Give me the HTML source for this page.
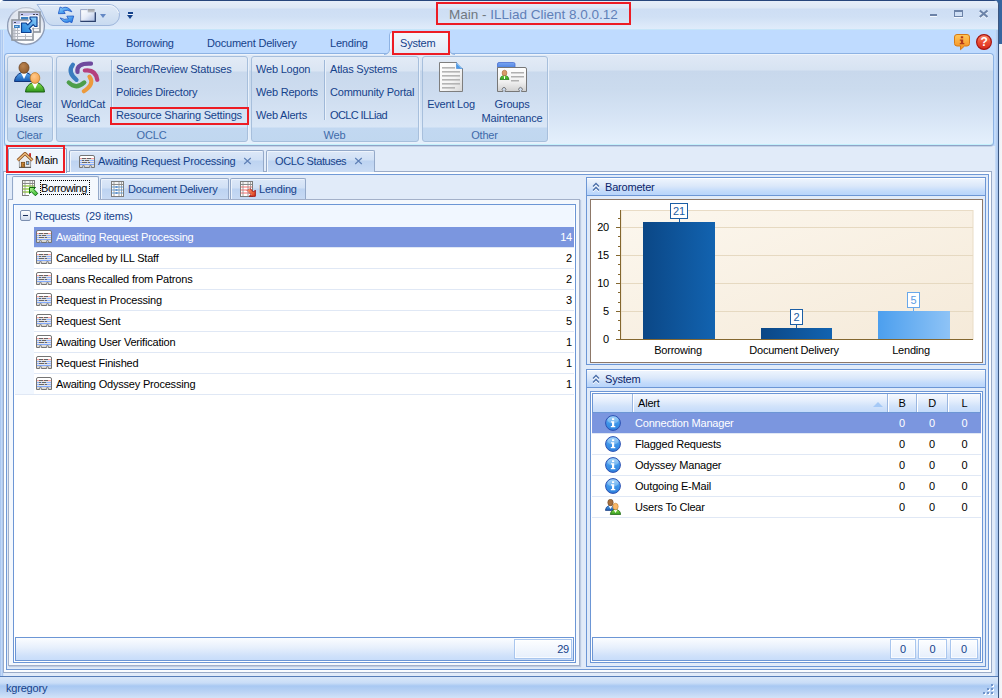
<!DOCTYPE html>
<html><head><meta charset="utf-8"><title>Main - ILLiad Client 8.0.0.12</title>
<style>
*{box-sizing:border-box;margin:0;padding:0}
html,body{width:1002px;height:698px;overflow:hidden;background:linear-gradient(90deg,#fff 0,#fff 999px,#e4eefb 999px,#e4eefb 1000px,#f1f2f6 1000px,#f5f5f8 1002px)}
body{font-family:"Liberation Sans","DejaVu Sans",sans-serif;font-size:11px;letter-spacing:-0.2px;color:#15428b;position:relative}
div,svg{position:absolute}
.t{white-space:nowrap;line-height:13px;height:13px}
.c{text-align:center}
#deskblue{left:996px;top:0;width:6px;height:44px;background:#36659f}
#win{left:0;top:0;width:999px;height:698px;overflow:hidden;border-radius:5px 5px 0 0;background:#bfdbff;border-right:1px solid #3b5680}
#cap{left:0;top:0;width:999px;height:30px;background:linear-gradient(#27467c 0,#27467c 1px,#e6eef9 1px,#dde8f6 8px,#cedef4 9px,#d0e0f5 17px,#dfebfa 28px,#e0ecfb 29px,#c6e5f9 29px,#c6e5f9 30px)}
#tabrow{left:0;top:30px;width:999px;height:24px;background:#bfdbff}
#lborder{left:0;top:30px;width:4px;height:668px;background:linear-gradient(90deg,#abc7f0 0,#abc7f0 1px,#c2d9f7 1px,#c2d9f7 2px,#aec9f0 2px,#aec9f0 3px,#d3e3f8 3px,#d3e3f8 4px)}
#rborder{left:995px;top:30px;width:3px;height:668px;background:linear-gradient(90deg,#d0e1f8 0,#b9d2f3 1px,#a9c6ef 3px)}
#ribbon{left:4px;top:53px;width:990px;height:93px;border:1px solid #8db2e3;border-bottom-color:#8fa3c7;border-radius:4px;background:linear-gradient(#e0e9f6 0,#d7e3f2 16px,#c8d8ec 17px,#cbdbee 35px,#d6e4f5 62px,#e4f0fc 90px);box-shadow:0 1px 0 rgba(143,163,199,.35),inset 0 -1px 0 #c3f1fc,inset 0 1px 0 #eef4fb}
.grp{top:56px;height:86px;border:1px solid #a7bfdc;border-radius:3px;background:linear-gradient(#e3ebf6 0,#dae5f3 14px,#c9d9ed 15px,#cddcef 35px,#d9e6f6 70px,#c2d8f1 71px,#c0d7ef 86px);box-shadow:1px 1px 0 #e9f1fb}
.grp .cap{left:-1px;right:0;bottom:0;height:15px;line-height:18px;overflow:hidden;text-align:center;color:#3e6aaa}
.sep{width:1px;background:#9fb8d8;box-shadow:1px 0 0 #e8f0fa}
#body{left:4px;top:146px;width:991px;height:531px;background:#e1ebf9}
#status{left:0;top:676px;width:999px;height:22px;border-top:1px solid #567db8;background:linear-gradient(#d9e7f9 0,#c9ddf7 6px,#a8c8f2 9px,#b7d1f4 14px,#d2e2f7 21px)}
.redbox{border:2px solid #ed1c24}
/* doc tabs */
.dtab{top:150px;height:22px;border:1px solid #94a9c9;border-bottom:none;border-radius:2px 2px 0 0;background:linear-gradient(#dde8f8 0,#d0e0f5 9px,#bdd3f1 10px,#c9dbf4 21px);box-shadow:inset 1px 1px 0 #eef4fc}
.dtab.sel{top:148px;height:25px;background:#f0f5fc;border-color:#8aa0c8;box-shadow:inset 1px 1px 0 #fff}
#frame{left:3px;top:171px;width:989px;height:502px;border:1px solid #9aabc8;background:#e1ebf9;box-shadow:inset 0 0 0 2px #fbfdff,inset 0 0 0 3px #7099d6}
.itab{top:178px;height:21px;border:1px solid #94a9c9;border-bottom:none;border-radius:2px 2px 0 0;background:linear-gradient(#dde8f8 0,#d0e0f5 9px,#bdd3f1 10px,#c9dbf4 22px);box-shadow:inset 1px 1px 0 #eef4fc}
.itab.sel{top:176px;height:24px;background:#f4f8fd}
.grid{background:#fff;border:1px solid #6c96d5}
.row{left:0;right:0;height:21px;border-bottom:1px solid #e0e8f5;color:#000}
.row .t{top:4px}
.row.sel{background:#7b96df;color:#fff}
.foot{border:1px solid #6c96d5;background:linear-gradient(#fbfdff 0,#e6effc 10px,#cfe1fa 18px,#c8ddfa 22px)}
.fcell{top:1px;height:20px;border:1px solid #a9c6ee;background:linear-gradient(#fdfeff,#e6effc);color:#15428b;text-align:right;line-height:18px;padding-right:4px;box-shadow:inset 0 0 0 1px rgba(255,255,255,.7)}
.pane{border:1px solid #6c96d5;background:#e1ebf9}
.phead{height:17px;background:linear-gradient(#edf4fd 0,#dbe8fa 7px,#c3dbfb 12px,#b5d3fb 17px);border-top:1px solid #fff}
</style></head><body>
<div id="deskblue"></div>
<div id="win">
<div id="cap"></div>
<div id="tabrow"></div>
<div id="body"></div>
<div id="lborder"></div><div id="rborder"></div>
<div id="ribbon"></div>
<div id="status"></div>
<!-- QAT pill -->
<svg style="left:30px;top:2px" width="95" height="28" viewBox="0 0 95 28">
 <defs><linearGradient id="qg" x1="0" y1="0" x2="0" y2="1"><stop offset="0" stop-color="#e0eaf7"/><stop offset="1" stop-color="#c8daf0"/></linearGradient></defs>
 <path d="M7 2.500 H79 A10.500 10.500 0 0 1 79 23.500 H23 Q17.500 23 15 17 Q11.500 7 7 2.500Z" fill="url(#qg)" stroke="#9fb7dc" stroke-width="1"/>
 <path d="M9.500 3.500 H79 A9.750 9.750 0 0 1 88.600 11" fill="none" stroke="#f2f6fc" stroke-width="1"/>
</svg>
<!-- title -->
<div class="t" style="left:449px;top:6px;font-size:13.5px;letter-spacing:0;line-height:17px;height:17px;color:#5f80b8"><span style="color:#70787f">Main - </span>ILLiad Client 8.0.0.12</div>
<div class="redbox" style="left:436px;top:2px;width:195px;height:23px"></div>
<!-- window buttons -->
<div style="left:930px;top:14px;width:7px;height:2px;background:#6c83a8;box-shadow:0 1px 0 #f4f8fd"></div>
<div style="left:954px;top:10px;width:9px;height:7px;border:1px solid #6c83a8;border-top-width:2px;box-shadow:0 1px 0 #f4f8fd"></div>
<svg style="left:978px;top:9px" width="12" height="10" viewBox="0 0 12 10"><path d="M1.800 1.500 L9.500 8 M9.500 1.500 L1.800 8" stroke="#f4f8fd" stroke-width="2.200" transform="translate(0,1)"/><path d="M1.800 1.500 L9.500 8 M9.500 1.500 L1.800 8" stroke="#6c83a8" stroke-width="2.200"/></svg>

<!-- ribbon tabs -->
<div class="t" style="left:66px;top:37px">Home</div>
<div class="t" style="left:126px;top:37px">Borrowing</div>
<div class="t" style="left:207px;top:37px">Document Delivery</div>
<div class="t" style="left:330px;top:37px">Lending</div>
<svg style="left:384px;top:30px" width="72" height="25" viewBox="0 0 72 25"><defs><linearGradient id="stg" x1="0" y1="0" x2="0" y2="1"><stop offset="0" stop-color="#f3f8fe"/><stop offset="1" stop-color="#e0e9f6"/></linearGradient></defs>
<path d="M0 24.500Q5.500 24 5.500 19V5Q5.500 1.500 9 1.500H62Q65.500 1.500 65.500 5V19Q65.500 24 71 24.500Z" fill="url(#stg)"/>
<path d="M0 24.500Q5.500 24 5.500 19V5Q5.500 1.500 9 1.500H62Q65.500 1.500 65.500 5V19Q65.500 24 71 24.500" fill="none" stroke="#8db2e3"/>
<path d="M6.500 19V5.500Q6.500 2.500 9.500 2.500H61.500" fill="none" stroke="#fff" stroke-opacity=".8"/></svg>
<div class="t" style="left:400px;top:37px">System</div>
<div class="redbox" style="left:392px;top:31px;width:58px;height:24px"></div>

<!-- groups -->
<div class="grp" style="left:7px;width:46px"><div class="cap">Clear</div></div>
<div class="grp" style="left:56px;width:192px"><div class="cap">OCLC</div></div>
<div class="grp" style="left:251px;width:168px"><div class="cap">Web</div></div>
<div class="grp" style="left:422px;width:126px"><div class="cap">Other</div></div>
<div class="sep" style="left:111px;top:60px;height:60px"></div>
<div class="sep" style="left:324px;top:60px;height:60px"></div>

<div class="t c" style="left:6px;width:46px;top:98px">Clear</div>
<div class="t c" style="left:6px;width:46px;top:112px">Users</div>
<div class="t c" style="left:56px;width:54px;top:98px">WorldCat</div>
<div class="t c" style="left:56px;width:54px;top:112px">Search</div>
<div class="t" style="left:116px;top:63px">Search/Review Statuses</div>
<div class="t" style="left:116px;top:86px">Policies Directory</div>
<div class="t" style="left:116px;top:109px">Resource Sharing Settings</div>
<div class="redbox" style="left:110px;top:107px;width:139px;height:18px"></div>
<div class="t" style="left:256px;top:63px">Web Logon</div>
<div class="t" style="left:256px;top:86px">Web Reports</div>
<div class="t" style="left:256px;top:109px">Web Alerts</div>
<div class="t" style="left:330px;top:63px">Atlas Systems</div>
<div class="t" style="left:330px;top:86px">Community Portal</div>
<div class="t" style="left:330px;top:109px;letter-spacing:-.6px">OCLC ILLiad</div>
<div class="t c" style="left:422px;width:58px;top:98px">Event Log</div>
<div class="t c" style="left:478px;width:68px;top:98px">Groups</div>
<div class="t c" style="left:478px;width:68px;top:112px">Maintenance</div>
<!-- document tabs / frame -->
<div id="frame"></div>
<div class="dtab" style="left:69px;width:195px"></div>
<div class="t" style="left:98px;top:155px">Awaiting Request Processing</div>
<svg style="left:243px;top:157px" width="9" height="8" viewBox="0 0 9 8"><path d="M1.200 1L7.800 7M7.800 1L1.200 7" stroke="#5f80b6" stroke-width="1.200" fill="none"/></svg>
<div class="dtab" style="left:266px;width:109px"></div>
<div class="t" style="left:275px;top:155px;letter-spacing:-.4px">OCLC Statuses</div>
<svg style="left:354px;top:157px" width="9" height="8" viewBox="0 0 9 8"><path d="M1.200 1L7.800 7M7.800 1L1.200 7" stroke="#5f80b6" stroke-width="1.200" fill="none"/></svg>
<div class="dtab sel" style="left:8px;width:59px"></div>
<div class="t" style="left:35px;top:154px;color:#000">Main</div>
<div class="redbox" style="left:6px;top:145px;width:59px;height:28px"></div>

<!-- left tab page -->
<div style="left:8px;top:199px;width:572px;height:467px;border:1px solid #a3b0c9;background:#f4f8fd;box-shadow:1px 1px 1px rgba(120,140,180,.35)"></div>
<div class="itab" style="left:100px;width:129px"></div>
<div class="t" style="left:128px;top:183px">Document Delivery</div>
<div class="itab" style="left:230px;width:76px"></div>
<div class="t" style="left:259px;top:183px">Lending</div>
<div class="itab sel" style="left:12px;width:87px"></div>
<div class="t" style="left:41px;top:182px;color:#000;letter-spacing:-.4px">Borrowing</div>
<div style="left:40px;top:180px;width:50px;height:15px;border:1px dotted #000"></div>

<div class="grid" style="left:13px;top:204px;width:563px;height:459px">
  <div style="left:1px;top:0;width:559px;height:22px;background:#f1f7ff"></div>
  <div style="left:1px;top:22px;width:19px;height:168px;background:#f1f7ff;border-bottom:1px solid #e0e8f5"></div>
  <div class="t" style="left:21px;top:5px;color:#15428b">Requests&nbsp; (29 items)</div>
  <div style="left:6px;top:5px;width:11px;height:11px;border:1px solid #7b8fb0;border-radius:2px;background:linear-gradient(#fff,#cfdaec)"></div>
  <div style="left:9px;top:10px;width:5px;height:1px;background:#1a2f5a"></div>
  <div class="row sel" style="top:22px;left:20px;right:1px"><div class="t" style="left:22px">Awaiting Request Processing</div><div class="t" style="right:2px">14</div></div>
  <div class="row" style="top:43px;left:20px;right:1px"><div class="t" style="left:22px">Cancelled by ILL Staff</div><div class="t" style="right:2px">2</div></div>
  <div class="row" style="top:64px;left:20px;right:1px"><div class="t" style="left:22px">Loans Recalled from Patrons</div><div class="t" style="right:2px">2</div></div>
  <div class="row" style="top:85px;left:20px;right:1px"><div class="t" style="left:22px">Request in Processing</div><div class="t" style="right:2px">3</div></div>
  <div class="row" style="top:106px;left:20px;right:1px"><div class="t" style="left:22px">Request Sent</div><div class="t" style="right:2px">5</div></div>
  <div class="row" style="top:127px;left:20px;right:1px"><div class="t" style="left:22px">Awaiting User Verification</div><div class="t" style="right:2px">1</div></div>
  <div class="row" style="top:148px;left:20px;right:1px"><div class="t" style="left:22px">Request Finished</div><div class="t" style="right:2px">1</div></div>
  <div class="row" style="top:169px;left:20px;right:1px"><div class="t" style="left:22px">Awaiting Odyssey Processing</div><div class="t" style="right:2px">1</div></div>
  <div class="foot" style="left:1px;top:432px;width:559px;height:24px"><div class="fcell" style="left:498px;width:58px;padding-right:2px">29</div></div>
</div>
<!-- barometer -->
<div class="pane" style="left:586px;top:177px;width:400px;height:188px"></div>
<div class="phead" style="left:587px;top:178px;width:398px"></div>
<div style="left:587px;top:195px;width:398px;height:1px;background:#6c96d5"></div>
<svg style="left:592px;top:182px" width="9" height="10" viewBox="0 0 9 10"><path d="M1 4.500 L4 1.500 L7 4.500 M1 8.500 L4 5.500 L7 8.500" fill="none" stroke="#fff" stroke-width="1.300" transform="translate(0,1)"/><path d="M1 4.500 L4 1.500 L7 4.500 M1 8.500 L4 5.500 L7 8.500" fill="none" stroke="#4a6ea9" stroke-width="1.300"/></svg>
<div class="t" style="left:605px;top:181px;color:#0a1f6b">Barometer</div>
<svg style="left:590px;top:199px;letter-spacing:-0.2px" width="393" height="164" viewBox="0 0 393 164" font-family="Liberation Sans, DejaVu Sans, sans-serif" font-size="11">
 <defs>
  <linearGradient id="pbg" x1="0" y1="0" x2="1" y2="1"><stop offset="0" stop-color="#fcf7ee"/><stop offset="1" stop-color="#f5ead9"/></linearGradient>
  <linearGradient id="b1" x1="0" y1="0" x2="1" y2="0"><stop offset="0" stop-color="#0b4786"/><stop offset="1" stop-color="#1263b0"/></linearGradient>
  <linearGradient id="b3" x1="0" y1="0" x2="1" y2="0"><stop offset="0" stop-color="#4c9fee"/><stop offset="1" stop-color="#8ec3f6"/></linearGradient>
 </defs>
 <rect x="0.500" y="0.500" width="392" height="163" fill="#fff" stroke="#8d7868"/>
 <rect x="31" y="11.500" width="352" height="129" fill="url(#pbg)" stroke="#e9dcc6" stroke-width="1"/>
 <g stroke="#e6d9c1" stroke-width="1"><path d="M31 28.500H383M31 56.500H383M31 84.500H383M31 112.500H383"/></g>
 <rect x="53" y="23" width="72" height="118" fill="url(#b1)"/>
 <rect x="171" y="129" width="71" height="12" fill="url(#b1)"/>
 <rect x="288" y="112" width="72" height="29" fill="url(#b3)"/>
 <g stroke="#84672f" stroke-width="1" fill="none">
  <path d="M30.500 11V141M26 140.500H383"/>
  <path d="M26 28.500H31M26 56.500H31M26 84.500H31M26 112.500H31"/>
  <path d="M28 131.5H31M28 121.5H31M28 103.5H31M28 93.5H31M28 75.5H31M28 65.5H31M28 47.5H31M28 37.5H31M28 19.5H31"/>
 </g>
 <path d="M89.500 19V23" stroke="#1b5ea5"/><rect x="80.500" y="4.500" width="17" height="15" fill="#fff" stroke="#1b5ea5"/>
 <text x="89" y="16" text-anchor="middle" fill="#1b5ea5">21</text>
 <path d="M206.500 125V129" stroke="#1b5ea5"/><rect x="200.500" y="110.500" width="12" height="15" fill="#fff" stroke="#1b5ea5"/>
 <text x="206.500" y="122" text-anchor="middle" fill="#1b5ea5">2</text>
 <path d="M323.500 108V112" stroke="#69a8ea"/><rect x="317.500" y="93.500" width="12" height="15" fill="#fff" stroke="#69a8ea"/>
 <text x="323.500" y="105" text-anchor="middle" fill="#5b9be3">5</text>
 <g fill="#000" text-anchor="end"><text x="19" y="32">20</text><text x="19" y="60">15</text><text x="19" y="88">10</text><text x="19" y="116">5</text><text x="19" y="144">0</text></g>
 <g fill="#000" text-anchor="middle"><text x="88" y="155">Borrowing</text><text x="204" y="155">Document Delivery</text><text x="321" y="155">Lending</text></g>
</svg>

<!-- system -->
<div class="pane" style="left:586px;top:369px;width:400px;height:298px"></div>
<div class="phead" style="left:587px;top:370px;width:398px"></div>
<div style="left:587px;top:387px;width:398px;height:1px;background:#6c96d5"></div>
<svg style="left:592px;top:374px" width="9" height="10" viewBox="0 0 9 10"><path d="M1 4.500 L4 1.500 L7 4.500 M1 8.500 L4 5.500 L7 8.500" fill="none" stroke="#fff" stroke-width="1.300" transform="translate(0,1)"/><path d="M1 4.500 L4 1.500 L7 4.500 M1 8.500 L4 5.500 L7 8.500" fill="none" stroke="#4a6ea9" stroke-width="1.300"/></svg>
<div class="t" style="left:605px;top:373px;color:#0a1f6b">System</div>
<div class="grid" style="left:590px;top:391px;width:393px;height:272px">
 <div style="left:1px;top:1px;width:389px;height:20px;border:1px solid #6c96d5;background:linear-gradient(#f6f9fe 0,#e4eefc 7px,#d2e3fa 12px,#c4dbfa 18px)"></div>
 <div style="left:41px;top:2px;width:1px;height:18px;background:#9ab6e0;box-shadow:1px 0 0 #fff"></div>
 <div style="left:296px;top:2px;width:1px;height:18px;background:#9ab6e0;box-shadow:1px 0 0 #fff"></div>
 <div style="left:325px;top:2px;width:1px;height:18px;background:#9ab6e0;box-shadow:1px 0 0 #fff"></div>
 <div style="left:356px;top:2px;width:1px;height:18px;background:#9ab6e0;box-shadow:1px 0 0 #fff"></div>
 <div class="t" style="left:47px;top:5px;color:#000">Alert</div>
 <div style="left:282px;top:10px;width:0;height:0;border-left:5px solid transparent;border-right:5px solid transparent;border-bottom:5px solid #a5c9f6"></div>
 <div class="t c" style="left:297px;width:28px;top:5px;color:#000">B</div>
 <div class="t c" style="left:326px;width:30px;top:5px;color:#000">D</div>
 <div class="t c" style="left:357px;width:33px;top:5px;color:#000">L</div>
 <div class="row sel" style="top:21px;left:1px;right:1px"><div class="t" style="left:43px;top:4px">Connection Manager</div><div class="t c" style="left:296px;width:28px;top:4px">0</div><div class="t c" style="left:325px;width:30px;top:4px">0</div><div class="t c" style="left:356px;width:33px;top:4px">0</div></div>
 <div class="row" style="top:42px;left:1px;right:1px"><div class="t" style="left:43px;top:4px">Flagged Requests</div><div class="t c" style="left:296px;width:28px;top:4px">0</div><div class="t c" style="left:325px;width:30px;top:4px">0</div><div class="t c" style="left:356px;width:33px;top:4px">0</div></div>
 <div class="row" style="top:63px;left:1px;right:1px"><div class="t" style="left:43px;top:4px">Odyssey Manager</div><div class="t c" style="left:296px;width:28px;top:4px">0</div><div class="t c" style="left:325px;width:30px;top:4px">0</div><div class="t c" style="left:356px;width:33px;top:4px">0</div></div>
 <div class="row" style="top:84px;left:1px;right:1px"><div class="t" style="left:43px;top:4px">Outgoing E-Mail</div><div class="t c" style="left:296px;width:28px;top:4px">0</div><div class="t c" style="left:325px;width:30px;top:4px">0</div><div class="t c" style="left:356px;width:33px;top:4px">0</div></div>
 <div class="row" style="top:105px;left:1px;right:1px"><div class="t" style="left:43px;top:4px">Users To Clear</div><div class="t c" style="left:296px;width:28px;top:4px">0</div><div class="t c" style="left:325px;width:30px;top:4px">0</div><div class="t c" style="left:356px;width:33px;top:4px">0</div></div>
 <div class="foot" style="left:1px;top:245px;width:389px;height:24px">
  <div class="fcell c" style="left:297px;width:26px;padding:0;text-align:center">0</div>
  <div class="fcell c" style="left:325px;width:29px;padding:0;text-align:center">0</div>
  <div class="fcell c" style="left:357px;width:28px;padding:0;text-align:center">0</div>
 </div>
</div>

<!-- status -->
<div class="t" style="left:6px;top:682px;color:#15428b">kgregory</div>
<svg style="left:983px;top:684px" width="12" height="12" viewBox="0 0 12 12" fill="#6f94cb"><rect x="8" y="0" width="2" height="2"/><rect x="4" y="4" width="2" height="2"/><rect x="8" y="4" width="2" height="2"/><rect x="0" y="8" width="2" height="2"/><rect x="4" y="8" width="2" height="2"/><rect x="8" y="8" width="2" height="2"/><g fill="#fff"><rect x="9" y="1" width="2" height="2"/><rect x="5" y="5" width="2" height="2"/><rect x="9" y="5" width="2" height="2"/><rect x="1" y="9" width="2" height="2"/><rect x="5" y="9" width="2" height="2"/><rect x="9" y="9" width="2" height="2"/></g><g fill="#6f94cb"><rect x="8" y="0" width="2" height="2"/><rect x="4" y="4" width="2" height="2"/><rect x="8" y="4" width="2" height="2"/><rect x="0" y="8" width="2" height="2"/><rect x="4" y="8" width="2" height="2"/><rect x="8" y="8" width="2" height="2"/></g></svg>

<!-- icons -->
<svg style="left:6px;top:6px" width="40" height="41" viewBox="0 0 40 41"><defs>
<radialGradient id="g1" cx=".5" cy=".9" r=".95"><stop offset="0" stop-color="#ffffff"/><stop offset=".5" stop-color="#f4f7fb"/><stop offset=".8" stop-color="#d3dbe8"/><stop offset="1" stop-color="#e6ebf3"/></radialGradient>
<linearGradient id="g2" x1="0" y1="1" x2="1" y2="0"><stop offset="0" stop-color="#1f80da"/><stop offset="1" stop-color="#8ccdf9"/></linearGradient>
<linearGradient id="g3" x1="0" y1="0" x2="0" y2="1"><stop offset="0" stop-color="#fff" stop-opacity=".9"/><stop offset="1" stop-color="#fff" stop-opacity=".1"/></linearGradient></defs>
<circle cx="20" cy="20.500" r="19" fill="#9aa8c0" opacity=".35"/>
<circle cx="20" cy="20" r="18.400" fill="url(#g1)" stroke="#8e9cb6" stroke-width="1.300"/>
<path d="M2.500 18A17.500 17.500 0 0 1 37.500 18Q20 22 2.500 18Z" fill="url(#g3)" opacity=".5"/>
<g>
<rect x="13" y="6" width="21" height="20" fill="#f1f3f7" stroke="#8d939c" stroke-width="1.600"/>
<rect x="14" y="7" width="19" height="3" fill="#c5c9ee"/><rect x="15" y="8" width="2" height="1" fill="#445"/><rect x="27" y="8" width="2" height="1" fill="#445"/><rect x="30" y="8" width="2" height="1" fill="#445"/>
<rect x="15" y="11" width="17" height="3" fill="#3a7fc0"/>
<path d="M14 16.500H33M14 19.500H33M14 22.500H33M20.500 14V25M27.500 14V25" stroke="#b4b8c0" stroke-width="1"/>
<rect x="6" y="14" width="21" height="20" fill="#f6f7fa" stroke="#8d939c" stroke-width="1.600"/>
<rect x="7" y="15" width="19" height="3" fill="#c5c9ee"/><rect x="8" y="16" width="2" height="1" fill="#445"/>
<rect x="8" y="19" width="17" height="3" fill="#3a7fc0"/><rect x="9" y="20" width="3" height="1" fill="#9cc8f0"/>
<rect x="7" y="22" width="2.500" height="11" fill="#c4c8d0"/>
<path d="M7 24.500H26M7 27.500H26M7 30.500H26M11.500 22V33M19.500 22V33" stroke="#b4b8c0" stroke-width="1"/>
</g>
<path d="M15.500 26.500V17H20L21.800 18.800L25.800 14.800L24 13V11H31V20.500H29L27.200 18.700L23.200 22.700L25 24.500V26.500Z" fill="url(#g2)" stroke="#fff" stroke-width="3.400" stroke-linejoin="round"/>
<path d="M15.500 26.500V17H20L21.800 18.800L25.800 14.800L24 13V11H31V20.500H29L27.200 18.700L23.200 22.700L25 24.500V26.500Z" fill="url(#g2)" stroke="#0d3f90" stroke-width="1.200" stroke-linejoin="round"/></svg>
<svg style="left:58px;top:6px" width="17" height="18" viewBox="0 0 17 18"><defs><linearGradient id="g4" x1="0" y1="0" x2="1" y2="1"><stop offset="0" stop-color="#a4dafc"/><stop offset=".5" stop-color="#4fa2f0"/><stop offset="1" stop-color="#1f6cdc"/></linearGradient></defs>
<path d="M2.100 1L.3 7.700L7.200 7.500L5.600 4.800Q9.400 3.400 13.900 5.800Q10 -.6 4.300 2Z" fill="url(#g4)" stroke="#1c56c4" stroke-width=".8" stroke-linejoin="round"/>
<path d="M13.900 16.700L15.700 10L8.800 10.200L10.400 12.900Q6.600 14.300 2.100 11.900Q6 18.300 11.700 15.700Z" fill="url(#g4)" stroke="#1c56c4" stroke-width=".8" stroke-linejoin="round"/></svg>
<svg style="left:80px;top:9px" width="17" height="14" viewBox="0 0 17 14"><defs><linearGradient id="g5" x1="0" y1="0" x2="1" y2="1"><stop offset="0" stop-color="#ffffff"/><stop offset=".5" stop-color="#e6ecf8"/><stop offset="1" stop-color="#a9bce2"/></linearGradient></defs>
<path d="M.6 .6H7.500V3.500H15V12H.6Z" fill="url(#g5)"/>
<rect x="7.800" y=".3" width="6.800" height="3" fill="#b9bcc2"/><rect x="7.800" y=".3" width="6.800" height="1" fill="#8e9299"/>
<path d="M.6 12.200V.6H7.500" fill="none" stroke="#8b9bbd" stroke-width=".9"/>
<path d="M.3 12.300H15.300V3.300" fill="none" stroke="#2c406c" stroke-width="1.300"/></svg>
<div style="left:100px;top:14px;width:0;height:0;border-left:3px solid transparent;border-right:3px solid transparent;border-top:4px solid #6488c4"></div>
<div style="left:128px;top:12px;width:5px;height:2px;background:#15428b;box-shadow:0 1px 0 #eef4fb"></div><div style="left:127px;top:15px;width:0;height:0;border-left:3.500px solid transparent;border-right:3.500px solid transparent;border-top:4px solid #15428b"></div>
<svg style="left:13px;top:62px" width="32" height="32" viewBox="0 0 32 32"><defs>
<linearGradient id="g6" x1="0" y1="0" x2="0" y2="1"><stop offset="0" stop-color="#5aa8ee"/><stop offset="1" stop-color="#1558b0"/></linearGradient>
<linearGradient id="g7" x1="0" y1="0" x2="0" y2="1"><stop offset="0" stop-color="#8be04e"/><stop offset="1" stop-color="#2d961c"/></linearGradient>
<radialGradient id="g8" cx=".4" cy=".35" r=".7"><stop offset="0" stop-color="#bb8450"/><stop offset="1" stop-color="#8d5a2c"/></radialGradient>
<radialGradient id="g9" cx=".4" cy=".35" r=".7"><stop offset="0" stop-color="#ffc98a"/><stop offset="1" stop-color="#f5a04a"/></radialGradient></defs>
<path d="M1.500 19.500Q2 13 8.500 10.500H13.500Q20 13 20.500 19.500Z" fill="url(#g6)" stroke="#12357a" stroke-width="1"/>
<path d="M8 10.800L11 17L14 10.800Z" fill="#fff"/>
<ellipse cx="11" cy="5.800" rx="5" ry="5.500" fill="url(#g8)" stroke="#6d4320" stroke-width=".8"/>
<path d="M12.500 30Q13 23 19.500 20.700H24.500Q31 23 31.500 30Z" fill="url(#g7)" stroke="#1a5e10" stroke-width="1"/>
<path d="M19 21L22 27L25 21Z" fill="#fff"/>
<ellipse cx="22" cy="16" rx="4.800" ry="5.400" fill="url(#g9)" stroke="#c4812f" stroke-width=".8"/></svg>
<svg style="left:64px;top:58px" width="38" height="38" viewBox="0 0 38 38"><g fill="none" stroke-width="4.200" stroke-linecap="round">
<path d="M8.900 6.700Q3 14 12.500 21.800" stroke="#3a7cbf"/>
<path d="M13.500 14Q12 5 27 5.700" stroke="#6f4a9e"/>
<path d="M20.800 12.500Q31.500 11 33.300 21.800" stroke="#b5407e"/>
<path d="M25.500 18.700Q31 26 19.800 33.200" stroke="#ec9a3c"/>
<path d="M4.700 24.400Q12 32 20.300 24.400" stroke="#4e9e4a"/></g></svg>
<svg style="left:439px;top:62px" width="24" height="30" viewBox="0 0 24 30"><defs><linearGradient id="g10" x1="0" y1="0" x2="1" y2="1"><stop offset="0" stop-color="#ffffff"/><stop offset=".6" stop-color="#f4f4f4"/><stop offset="1" stop-color="#d6d6d6"/></linearGradient></defs>
<path d="M.5 .5H17.500L23.500 6.500V29.500H.5Z" fill="url(#g10)" stroke="#7e7e7e"/>
<path d="M17.500 .5L23.500 6.500H17.500Z" fill="#4c9be8" stroke="#3b7fd0" stroke-width=".6"/><path d="M17.800 1.200L22.800 6.200" stroke="#cfe6fb" stroke-width="1"/>
<g fill="#b4b4b4"><rect x="3" y="5" width="13" height="1.600"/><rect x="3" y="9" width="18" height="1.600"/><rect x="3" y="13" width="18" height="1.600"/><rect x="3" y="17" width="18" height="1.600"/><rect x="3" y="21" width="18" height="1.600"/><rect x="3" y="25" width="13" height="1.600"/></g></svg>
<svg style="left:497px;top:62px" width="30" height="30" viewBox="0 0 30 30"><defs><linearGradient id="g11" x1="0" y1="0" x2="0" y2="1"><stop offset="0" stop-color="#ffffff"/><stop offset=".6" stop-color="#f0f0f0"/><stop offset="1" stop-color="#cfcfcf"/></linearGradient>
<linearGradient id="g12" x1="0" y1="0" x2="0" y2="1"><stop offset="0" stop-color="#7aa6f2"/><stop offset="1" stop-color="#4a7fe0"/></linearGradient>
<linearGradient id="g13" x1="0" y1="0" x2="0" y2="1"><stop offset="0" stop-color="#7bdc4a"/><stop offset="1" stop-color="#2a9a1c"/></linearGradient></defs>
<path d="M.5 6V2Q.5 .5 2 .5H16.500Q18 .5 18 2V6Z" fill="url(#g12)" stroke="#4a6fd0" stroke-width=".8"/>
<path d="M.5 5.500H28Q29.500 5.500 29.500 7V29.500H24.500V28.800A1.800 1.800 0 1 0 22.500 28.800V29.500H8V28.800A1.800 1.800 0 1 0 6 28.800V29.500H.5Z" fill="url(#g11)" stroke="#777"/>
<path d="M3 17.500Q3.500 14 6.500 13.500H8.500Q11.500 14 12 17.500Z" fill="url(#g13)" stroke="#1e7a14" stroke-width=".7"/>
<rect x="7" y="14" width="1" height="3" fill="#fff"/>
<ellipse cx="7.500" cy="11" rx="2.400" ry="2.800" fill="#d99a6a" stroke="#a66a3a" stroke-width=".6"/>
<g fill="#b0b0b0"><rect x="14" y="10" width="13" height="1.500"/><rect x="14" y="14" width="13" height="1.500"/><rect x="14" y="18" width="8" height="1.500"/></g></svg>
<svg style="left:16px;top:152px" width="18" height="17" viewBox="0 0 18 17"><rect x="13.200" y="1.200" width="1.700" height="5" fill="#c01414"/>
<path d="M3.400 7.500L9 2.500L14.600 7.500V15.300H3.400Z" fill="#ececec" stroke="#8c8c8c" stroke-width=".8"/>
<path d="M3 15.400H15" stroke="#555" stroke-width="1"/>
<rect x="5.300" y="10.300" width="3.400" height="4.800" fill="#c98434" stroke="#6e4412" stroke-width=".7"/>
<rect x="7.400" y="12.500" width=".8" height=".8" fill="#3a2408"/>
<rect x="10.500" y="9.500" width="2.300" height="3" fill="#7cc0f6" stroke="#666" stroke-width=".8"/>
<path d="M1.700 8.400L9 1.400L16.400 8.400" fill="none" stroke="#8a5222" stroke-width="3" stroke-linejoin="miter"/>
<path d="M1.900 8.200L9 1.500L16.200 8.200" fill="none" stroke="#eebb7c" stroke-width="1.500" stroke-linejoin="miter"/></svg>
<svg style="left:79px;top:155px" width="16" height="13" viewBox="0 0 16 13"><path d="M2 .5H14Q15.500 .5 15.500 2V12.500H12.300V11.200Q12.300 10.300 11.500 10.300Q10.700 10.300 10.700 11.200V12.500H5.300V11.200Q5.300 10.300 4.500 10.300Q3.700 10.300 3.700 11.200V12.500H.5V2Q.5 .5 2 .5Z" fill="#fff" stroke="#747474"/>
<rect x="1" y="10" width="14" height="2" fill="#dcdad6"/>
<path d="M3.700 12V11.200Q3.700 10.300 4.500 10.300Q5.300 10.300 5.300 11.200V12M10.700 12V11.200Q10.700 10.300 11.500 10.300Q12.300 10.300 12.300 11.200V12" fill="#f4f8fd" stroke="#747474"/>
<rect x="1" y="3" width="14" height="1" fill="#ffa3a3"/><rect x="1" y="5" width="14" height="1" fill="#93b5ff"/><rect x="1" y="7" width="14" height="1" fill="#93b5ff"/><rect x="1" y="9" width="14" height="1" fill="#82a9fb"/>
<rect x="1" y="4" width="14" height="1" fill="#e6e6e6"/><rect x="1" y="6" width="14" height="1" fill="#e6e6e6"/><rect x="1" y="8" width="14" height="1" fill="#e6e6e6"/>
<g fill="#666"><rect x="3" y="3" width="4" height="1"/><rect x="8" y="3" width="4" height="1"/><rect x="3" y="5" width="2" height="1"/><rect x="6" y="5" width="4" height="1"/><rect x="3" y="7" width="5" height="1"/><rect x="9" y="7" width="2" height="1"/></g></svg>
<svg style="left:36px;top:230px" width="16" height="13" viewBox="0 0 16 13"><path d="M2 .5H14Q15.500 .5 15.500 2V12.500H12.300V11.200Q12.300 10.300 11.500 10.300Q10.700 10.300 10.700 11.200V12.500H5.300V11.200Q5.300 10.300 4.500 10.300Q3.700 10.300 3.700 11.200V12.500H.5V2Q.5 .5 2 .5Z" fill="#fff" stroke="#747474"/>
<rect x="1" y="10" width="14" height="2" fill="#dcdad6"/>
<path d="M3.700 12V11.200Q3.700 10.300 4.500 10.300Q5.300 10.300 5.300 11.200V12M10.700 12V11.200Q10.700 10.300 11.500 10.300Q12.300 10.300 12.300 11.200V12" fill="#f4f8fd" stroke="#747474"/>
<rect x="1" y="3" width="14" height="1" fill="#ffa3a3"/><rect x="1" y="5" width="14" height="1" fill="#93b5ff"/><rect x="1" y="7" width="14" height="1" fill="#93b5ff"/><rect x="1" y="9" width="14" height="1" fill="#82a9fb"/>
<rect x="1" y="4" width="14" height="1" fill="#e6e6e6"/><rect x="1" y="6" width="14" height="1" fill="#e6e6e6"/><rect x="1" y="8" width="14" height="1" fill="#e6e6e6"/>
<g fill="#666"><rect x="3" y="3" width="4" height="1"/><rect x="8" y="3" width="4" height="1"/><rect x="3" y="5" width="2" height="1"/><rect x="6" y="5" width="4" height="1"/><rect x="3" y="7" width="5" height="1"/><rect x="9" y="7" width="2" height="1"/></g></svg>
<svg style="left:36px;top:251px" width="16" height="13" viewBox="0 0 16 13"><path d="M2 .5H14Q15.500 .5 15.500 2V12.500H12.300V11.200Q12.300 10.300 11.500 10.300Q10.700 10.300 10.700 11.200V12.500H5.300V11.200Q5.300 10.300 4.500 10.300Q3.700 10.300 3.700 11.200V12.500H.5V2Q.5 .5 2 .5Z" fill="#fff" stroke="#747474"/>
<rect x="1" y="10" width="14" height="2" fill="#dcdad6"/>
<path d="M3.700 12V11.200Q3.700 10.300 4.500 10.300Q5.300 10.300 5.300 11.200V12M10.700 12V11.200Q10.700 10.300 11.500 10.300Q12.300 10.300 12.300 11.200V12" fill="#f4f8fd" stroke="#747474"/>
<rect x="1" y="3" width="14" height="1" fill="#ffa3a3"/><rect x="1" y="5" width="14" height="1" fill="#93b5ff"/><rect x="1" y="7" width="14" height="1" fill="#93b5ff"/><rect x="1" y="9" width="14" height="1" fill="#82a9fb"/>
<rect x="1" y="4" width="14" height="1" fill="#e6e6e6"/><rect x="1" y="6" width="14" height="1" fill="#e6e6e6"/><rect x="1" y="8" width="14" height="1" fill="#e6e6e6"/>
<g fill="#666"><rect x="3" y="3" width="4" height="1"/><rect x="8" y="3" width="4" height="1"/><rect x="3" y="5" width="2" height="1"/><rect x="6" y="5" width="4" height="1"/><rect x="3" y="7" width="5" height="1"/><rect x="9" y="7" width="2" height="1"/></g></svg>
<svg style="left:36px;top:272px" width="16" height="13" viewBox="0 0 16 13"><path d="M2 .5H14Q15.500 .5 15.500 2V12.500H12.300V11.200Q12.300 10.300 11.500 10.300Q10.700 10.300 10.700 11.200V12.500H5.300V11.200Q5.300 10.300 4.500 10.300Q3.700 10.300 3.700 11.200V12.500H.5V2Q.5 .5 2 .5Z" fill="#fff" stroke="#747474"/>
<rect x="1" y="10" width="14" height="2" fill="#dcdad6"/>
<path d="M3.700 12V11.200Q3.700 10.300 4.500 10.300Q5.300 10.300 5.300 11.200V12M10.700 12V11.200Q10.700 10.300 11.500 10.300Q12.300 10.300 12.300 11.200V12" fill="#f4f8fd" stroke="#747474"/>
<rect x="1" y="3" width="14" height="1" fill="#ffa3a3"/><rect x="1" y="5" width="14" height="1" fill="#93b5ff"/><rect x="1" y="7" width="14" height="1" fill="#93b5ff"/><rect x="1" y="9" width="14" height="1" fill="#82a9fb"/>
<rect x="1" y="4" width="14" height="1" fill="#e6e6e6"/><rect x="1" y="6" width="14" height="1" fill="#e6e6e6"/><rect x="1" y="8" width="14" height="1" fill="#e6e6e6"/>
<g fill="#666"><rect x="3" y="3" width="4" height="1"/><rect x="8" y="3" width="4" height="1"/><rect x="3" y="5" width="2" height="1"/><rect x="6" y="5" width="4" height="1"/><rect x="3" y="7" width="5" height="1"/><rect x="9" y="7" width="2" height="1"/></g></svg>
<svg style="left:36px;top:293px" width="16" height="13" viewBox="0 0 16 13"><path d="M2 .5H14Q15.500 .5 15.500 2V12.500H12.300V11.200Q12.300 10.300 11.500 10.300Q10.700 10.300 10.700 11.200V12.500H5.300V11.200Q5.300 10.300 4.500 10.300Q3.700 10.300 3.700 11.200V12.500H.5V2Q.5 .5 2 .5Z" fill="#fff" stroke="#747474"/>
<rect x="1" y="10" width="14" height="2" fill="#dcdad6"/>
<path d="M3.700 12V11.200Q3.700 10.300 4.500 10.300Q5.300 10.300 5.300 11.200V12M10.700 12V11.200Q10.700 10.300 11.500 10.300Q12.300 10.300 12.300 11.200V12" fill="#f4f8fd" stroke="#747474"/>
<rect x="1" y="3" width="14" height="1" fill="#ffa3a3"/><rect x="1" y="5" width="14" height="1" fill="#93b5ff"/><rect x="1" y="7" width="14" height="1" fill="#93b5ff"/><rect x="1" y="9" width="14" height="1" fill="#82a9fb"/>
<rect x="1" y="4" width="14" height="1" fill="#e6e6e6"/><rect x="1" y="6" width="14" height="1" fill="#e6e6e6"/><rect x="1" y="8" width="14" height="1" fill="#e6e6e6"/>
<g fill="#666"><rect x="3" y="3" width="4" height="1"/><rect x="8" y="3" width="4" height="1"/><rect x="3" y="5" width="2" height="1"/><rect x="6" y="5" width="4" height="1"/><rect x="3" y="7" width="5" height="1"/><rect x="9" y="7" width="2" height="1"/></g></svg>
<svg style="left:36px;top:314px" width="16" height="13" viewBox="0 0 16 13"><path d="M2 .5H14Q15.500 .5 15.500 2V12.500H12.300V11.200Q12.300 10.300 11.500 10.300Q10.700 10.300 10.700 11.200V12.500H5.300V11.200Q5.300 10.300 4.500 10.300Q3.700 10.300 3.700 11.200V12.500H.5V2Q.5 .5 2 .5Z" fill="#fff" stroke="#747474"/>
<rect x="1" y="10" width="14" height="2" fill="#dcdad6"/>
<path d="M3.700 12V11.200Q3.700 10.300 4.500 10.300Q5.300 10.300 5.300 11.200V12M10.700 12V11.200Q10.700 10.300 11.500 10.300Q12.300 10.300 12.300 11.200V12" fill="#f4f8fd" stroke="#747474"/>
<rect x="1" y="3" width="14" height="1" fill="#ffa3a3"/><rect x="1" y="5" width="14" height="1" fill="#93b5ff"/><rect x="1" y="7" width="14" height="1" fill="#93b5ff"/><rect x="1" y="9" width="14" height="1" fill="#82a9fb"/>
<rect x="1" y="4" width="14" height="1" fill="#e6e6e6"/><rect x="1" y="6" width="14" height="1" fill="#e6e6e6"/><rect x="1" y="8" width="14" height="1" fill="#e6e6e6"/>
<g fill="#666"><rect x="3" y="3" width="4" height="1"/><rect x="8" y="3" width="4" height="1"/><rect x="3" y="5" width="2" height="1"/><rect x="6" y="5" width="4" height="1"/><rect x="3" y="7" width="5" height="1"/><rect x="9" y="7" width="2" height="1"/></g></svg>
<svg style="left:36px;top:335px" width="16" height="13" viewBox="0 0 16 13"><path d="M2 .5H14Q15.500 .5 15.500 2V12.500H12.300V11.200Q12.300 10.300 11.500 10.300Q10.700 10.300 10.700 11.200V12.500H5.300V11.200Q5.300 10.300 4.500 10.300Q3.700 10.300 3.700 11.200V12.500H.5V2Q.5 .5 2 .5Z" fill="#fff" stroke="#747474"/>
<rect x="1" y="10" width="14" height="2" fill="#dcdad6"/>
<path d="M3.700 12V11.200Q3.700 10.300 4.500 10.300Q5.300 10.300 5.300 11.200V12M10.700 12V11.200Q10.700 10.300 11.500 10.300Q12.300 10.300 12.300 11.200V12" fill="#f4f8fd" stroke="#747474"/>
<rect x="1" y="3" width="14" height="1" fill="#ffa3a3"/><rect x="1" y="5" width="14" height="1" fill="#93b5ff"/><rect x="1" y="7" width="14" height="1" fill="#93b5ff"/><rect x="1" y="9" width="14" height="1" fill="#82a9fb"/>
<rect x="1" y="4" width="14" height="1" fill="#e6e6e6"/><rect x="1" y="6" width="14" height="1" fill="#e6e6e6"/><rect x="1" y="8" width="14" height="1" fill="#e6e6e6"/>
<g fill="#666"><rect x="3" y="3" width="4" height="1"/><rect x="8" y="3" width="4" height="1"/><rect x="3" y="5" width="2" height="1"/><rect x="6" y="5" width="4" height="1"/><rect x="3" y="7" width="5" height="1"/><rect x="9" y="7" width="2" height="1"/></g></svg>
<svg style="left:36px;top:356px" width="16" height="13" viewBox="0 0 16 13"><path d="M2 .5H14Q15.500 .5 15.500 2V12.500H12.300V11.200Q12.300 10.300 11.500 10.300Q10.700 10.300 10.700 11.200V12.500H5.300V11.200Q5.300 10.300 4.500 10.300Q3.700 10.300 3.700 11.200V12.500H.5V2Q.5 .5 2 .5Z" fill="#fff" stroke="#747474"/>
<rect x="1" y="10" width="14" height="2" fill="#dcdad6"/>
<path d="M3.700 12V11.200Q3.700 10.300 4.500 10.300Q5.300 10.300 5.300 11.200V12M10.700 12V11.200Q10.700 10.300 11.500 10.300Q12.300 10.300 12.300 11.200V12" fill="#f4f8fd" stroke="#747474"/>
<rect x="1" y="3" width="14" height="1" fill="#ffa3a3"/><rect x="1" y="5" width="14" height="1" fill="#93b5ff"/><rect x="1" y="7" width="14" height="1" fill="#93b5ff"/><rect x="1" y="9" width="14" height="1" fill="#82a9fb"/>
<rect x="1" y="4" width="14" height="1" fill="#e6e6e6"/><rect x="1" y="6" width="14" height="1" fill="#e6e6e6"/><rect x="1" y="8" width="14" height="1" fill="#e6e6e6"/>
<g fill="#666"><rect x="3" y="3" width="4" height="1"/><rect x="8" y="3" width="4" height="1"/><rect x="3" y="5" width="2" height="1"/><rect x="6" y="5" width="4" height="1"/><rect x="3" y="7" width="5" height="1"/><rect x="9" y="7" width="2" height="1"/></g></svg>
<svg style="left:36px;top:377px" width="16" height="13" viewBox="0 0 16 13"><path d="M2 .5H14Q15.500 .5 15.500 2V12.500H12.300V11.200Q12.300 10.300 11.500 10.300Q10.700 10.300 10.700 11.200V12.500H5.300V11.200Q5.300 10.300 4.500 10.300Q3.700 10.300 3.700 11.200V12.500H.5V2Q.5 .5 2 .5Z" fill="#fff" stroke="#747474"/>
<rect x="1" y="10" width="14" height="2" fill="#dcdad6"/>
<path d="M3.700 12V11.200Q3.700 10.300 4.500 10.300Q5.300 10.300 5.300 11.200V12M10.700 12V11.200Q10.700 10.300 11.500 10.300Q12.300 10.300 12.300 11.200V12" fill="#f4f8fd" stroke="#747474"/>
<rect x="1" y="3" width="14" height="1" fill="#ffa3a3"/><rect x="1" y="5" width="14" height="1" fill="#93b5ff"/><rect x="1" y="7" width="14" height="1" fill="#93b5ff"/><rect x="1" y="9" width="14" height="1" fill="#82a9fb"/>
<rect x="1" y="4" width="14" height="1" fill="#e6e6e6"/><rect x="1" y="6" width="14" height="1" fill="#e6e6e6"/><rect x="1" y="8" width="14" height="1" fill="#e6e6e6"/>
<g fill="#666"><rect x="3" y="3" width="4" height="1"/><rect x="8" y="3" width="4" height="1"/><rect x="3" y="5" width="2" height="1"/><rect x="6" y="5" width="4" height="1"/><rect x="3" y="7" width="5" height="1"/><rect x="9" y="7" width="2" height="1"/></g></svg>
<svg style="left:22px;top:180px" width="17" height="17" viewBox="0 0 17 17"><rect x=".5" y=".5" width="12" height="15" fill="#fff" stroke="#7d7d7d"/>
<rect x="1" y="1" width="11" height="2" fill="#f2f2f2"/><rect x="1" y="3" width="11" height="1" fill="#8a8a8a"/>
<rect x="1" y="5" width="11" height="2" fill="#b4dc78"/><rect x="1" y="8" width="11" height="2" fill="#b4dc78"/><rect x="1" y="11" width="11" height="2" fill="#b4dc78"/>
<g fill="#8a8a8a" opacity=".75"><rect x="2.500" y="1" width="1" height="14"/><rect x="7.500" y="1" width="1" height="14"/><rect x="10" y="1" width="1" height="14"/></g><defs><linearGradient id="g14" x1="0" y1="0" x2="1" y2="1"><stop offset="0" stop-color="#b4f892"/><stop offset="1" stop-color="#2cb52c"/></linearGradient></defs>
<rect x="7" y="7" width="6" height="9" fill="#f4f8fd"/><rect x="11" y="9" width="3" height="7" fill="#f4f8fd"/>
<path d="M7.500 7.500H13.500L11.700 9.300L15.800 13.400L13.400 15.800L9.300 11.700L7.500 13.500Z" fill="url(#g14)" stroke="#0b6b0b" stroke-width="1" stroke-linejoin="round"/></svg>
<svg style="left:111px;top:181px" width="13" height="16" viewBox="0 0 13 16"><rect x=".5" y=".5" width="12" height="15" fill="#fff" stroke="#7d7d7d"/>
<rect x="1" y="1" width="11" height="2" fill="#f2f2f2"/><rect x="1" y="3" width="11" height="1" fill="#8a8a8a"/>
<rect x="1" y="5" width="11" height="2" fill="#a9d1f7"/><rect x="1" y="8" width="11" height="2" fill="#a9d1f7"/><rect x="1" y="11" width="11" height="2" fill="#a9d1f7"/>
<g fill="#8a8a8a" opacity=".75"><rect x="2.500" y="1" width="1" height="14"/><rect x="7.500" y="1" width="1" height="14"/><rect x="10" y="1" width="1" height="14"/></g><g fill="#2a5a9a"><rect x="4.500" y="5.500" width="2" height="1"/><rect x="4.500" y="8.500" width="2" height="1"/><rect x="4.500" y="11.500" width="2" height="1"/></g></svg>
<svg style="left:240px;top:181px" width="17" height="17" viewBox="0 0 17 17"><rect x=".5" y=".5" width="12" height="15" fill="#fff" stroke="#7d7d7d"/>
<rect x="1" y="1" width="11" height="2" fill="#f2f2f2"/><rect x="1" y="3" width="11" height="1" fill="#8a8a8a"/>
<rect x="1" y="5" width="11" height="2" fill="#ffb3b3"/><rect x="1" y="8" width="11" height="2" fill="#ffb3b3"/><rect x="1" y="11" width="11" height="2" fill="#ffb3b3"/>
<g fill="#8a8a8a" opacity=".75"><rect x="2.500" y="1" width="1" height="14"/><rect x="7.500" y="1" width="1" height="14"/><rect x="10" y="1" width="1" height="14"/></g><defs><linearGradient id="g15" x1="0" y1="0" x2="1" y2="1"><stop offset="0" stop-color="#ff9a6a"/><stop offset="1" stop-color="#d93a1a"/></linearGradient></defs>
<path d="M9.700 7.200L13.500 11L15.300 9.200V15.300H9.200L11 13.500L7.200 9.700Z" fill="url(#g15)" stroke="#a31515" stroke-width="1" stroke-linejoin="round"/>
<path d="M9.700 7.200L7.200 9.700L11 13.500" fill="none" stroke="#fff" stroke-width="1" stroke-dasharray="1 1"/></svg>
<svg style="left:605px;top:415px" width="16" height="16" viewBox="0 0 16 16"><defs><linearGradient id="g16" x1="0" y1="0" x2="0" y2="1"><stop offset="0" stop-color="#8ccaf9"/><stop offset=".5" stop-color="#3f97ea"/><stop offset="1" stop-color="#2f80dc"/></linearGradient></defs>
<circle cx="8" cy="8" r="7.400" fill="url(#g16)" stroke="#2b4fb2" stroke-width="1"/>
<ellipse cx="8" cy="5" rx="5.500" ry="3.500" fill="#fff" opacity=".25"/>
<rect x="7" y="3.300" width="2.200" height="1.800" fill="#fff"/><path d="M6 6.300H9.200V11H10.300V12.300H5.800V11H7V7.600H6Z" fill="#fff"/></svg>
<svg style="left:605px;top:436px" width="16" height="16" viewBox="0 0 16 16"><defs><linearGradient id="g17" x1="0" y1="0" x2="0" y2="1"><stop offset="0" stop-color="#8ccaf9"/><stop offset=".5" stop-color="#3f97ea"/><stop offset="1" stop-color="#2f80dc"/></linearGradient></defs>
<circle cx="8" cy="8" r="7.400" fill="url(#g17)" stroke="#2b4fb2" stroke-width="1"/>
<ellipse cx="8" cy="5" rx="5.500" ry="3.500" fill="#fff" opacity=".25"/>
<rect x="7" y="3.300" width="2.200" height="1.800" fill="#fff"/><path d="M6 6.300H9.200V11H10.300V12.300H5.800V11H7V7.600H6Z" fill="#fff"/></svg>
<svg style="left:605px;top:457px" width="16" height="16" viewBox="0 0 16 16"><defs><linearGradient id="g18" x1="0" y1="0" x2="0" y2="1"><stop offset="0" stop-color="#8ccaf9"/><stop offset=".5" stop-color="#3f97ea"/><stop offset="1" stop-color="#2f80dc"/></linearGradient></defs>
<circle cx="8" cy="8" r="7.400" fill="url(#g18)" stroke="#2b4fb2" stroke-width="1"/>
<ellipse cx="8" cy="5" rx="5.500" ry="3.500" fill="#fff" opacity=".25"/>
<rect x="7" y="3.300" width="2.200" height="1.800" fill="#fff"/><path d="M6 6.300H9.200V11H10.300V12.300H5.800V11H7V7.600H6Z" fill="#fff"/></svg>
<svg style="left:605px;top:478px" width="16" height="16" viewBox="0 0 16 16"><defs><linearGradient id="g19" x1="0" y1="0" x2="0" y2="1"><stop offset="0" stop-color="#8ccaf9"/><stop offset=".5" stop-color="#3f97ea"/><stop offset="1" stop-color="#2f80dc"/></linearGradient></defs>
<circle cx="8" cy="8" r="7.400" fill="url(#g19)" stroke="#2b4fb2" stroke-width="1"/>
<ellipse cx="8" cy="5" rx="5.500" ry="3.500" fill="#fff" opacity=".25"/>
<rect x="7" y="3.300" width="2.200" height="1.800" fill="#fff"/><path d="M6 6.300H9.200V11H10.300V12.300H5.800V11H7V7.600H6Z" fill="#fff"/></svg>
<svg style="left:605px;top:499px" width="16" height="16" viewBox="0 0 16 16"><defs>
<linearGradient id="g20" x1="0" y1="0" x2="0" y2="1"><stop offset="0" stop-color="#5aa8ee"/><stop offset="1" stop-color="#1558b0"/></linearGradient>
<linearGradient id="g21" x1="0" y1="0" x2="0" y2="1"><stop offset="0" stop-color="#8be04e"/><stop offset="1" stop-color="#2d961c"/></linearGradient></defs>
<path d="M.4 11.400Q.6 8 3.500 6.800H7.500Q9.500 8 9.800 11.400Z" fill="url(#g20)" stroke="#12357a" stroke-width=".7"/>
<path d="M3.800 7L5.500 10L7.200 7Z" fill="#fff"/>
<ellipse cx="5.500" cy="3.500" rx="2.700" ry="3.200" fill="#a8703c" stroke="#6d4320" stroke-width=".6"/>
<path d="M5.300 15.500Q5.500 12 8.500 10.800H12.500Q15.500 12 15.700 15.500Z" fill="url(#g21)" stroke="#1a5e10" stroke-width=".7"/>
<path d="M8.800 11L10.500 14L12.200 11Z" fill="#fff"/>
<ellipse cx="10.500" cy="7.500" rx="2.700" ry="3.300" fill="#fbb868" stroke="#c4812f" stroke-width=".6"/></svg>
<svg style="left:954px;top:34px" width="16" height="17" viewBox="0 0 16 17"><defs><linearGradient id="g22" x1="0" y1="0" x2="0" y2="1"><stop offset="0" stop-color="#ffc85a"/><stop offset="1" stop-color="#f48a1c"/></linearGradient></defs>
<path d="M3 .5H13Q15.500 .5 15.500 3V9.500Q15.500 12 13 12H10.500L6.500 15.700V12H3Q.5 12 .5 9.500V3Q.5 .5 3 .5Z" fill="url(#g22)" stroke="#d67a16"/>
<rect x="6.800" y="2.300" width="2.400" height="2" fill="#b23a1a"/><path d="M5.800 5.500H9.200V9H10.300V10.300H5.800V9H6.900V6.800H5.800Z" fill="#b23a1a"/></svg>
<svg style="left:976px;top:34px" width="16" height="16" viewBox="0 0 16 16"><defs><linearGradient id="g23" x1="0" y1="0" x2="0" y2="1"><stop offset="0" stop-color="#f9866a"/><stop offset=".55" stop-color="#ea4a30"/><stop offset="1" stop-color="#d62a1c"/></linearGradient></defs>
<circle cx="8" cy="8" r="7.400" fill="url(#g23)" stroke="#a51412" stroke-width="1.200"/>
<text x="8" y="12.300" text-anchor="middle" font-family="Liberation Sans, sans-serif" font-weight="bold" font-size="12" fill="#fff">?</text></svg>
</div></body></html>
